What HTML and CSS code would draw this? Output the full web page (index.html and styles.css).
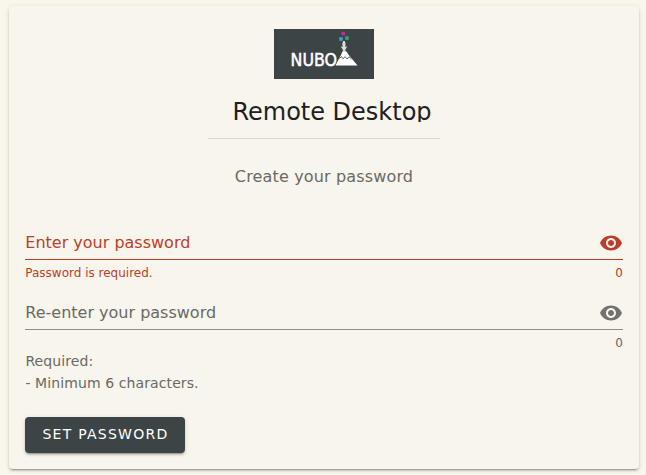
FILE: index.html
```html
<!DOCTYPE html>
<html lang="en">
<head>
<meta charset="utf-8">
<title>Remote Desktop</title>
<link rel="stylesheet" href="styles.css">
</head>
<body>
<main class="card">
  <header class="header">
    <svg class="logo" viewBox="0 0 100 50" role="img" aria-label="NUBO">
      <rect width="100" height="50" fill="#3c4445"/>
      <text class="logo-text" x="16.6" y="36.5" textLength="46.5" lengthAdjust="spacingAndGlyphs">NUBO</text>
      <path d="M61.5 36.5 L67.5 25 Q68 22 70.3 22 Q73 22 74 25 L83.5 36.5Z" fill="#fff"/>
      <path d="M65.5 29.5 L67.5 27.5 L69 29.8 L71 27.7 L73 30 L75 27.7 L77.5 29.8" fill="none" stroke="#3c4445" stroke-width=".8"/>
      <path d="M68.6 23 L69 21 L66.8 17.5 L68.8 17.8 L68.2 15 L69.2 12 L70.8 12 L71.6 15 L71.2 17.8 L73.2 17.5 L71.2 21 L71.8 23Z" fill="#d9dcdc"/>
      <rect x="67.4" y="2.8" width="3.7" height="3.6" fill="#c02d91"/>
      <rect x="65.2" y="8.2" width="3.6" height="3.6" fill="#3c9fd3"/>
      <rect x="71.2" y="7.3" width="3.5" height="3.5" fill="#45a65b"/>
    </svg>
    <h1 class="title">Remote Desktop</h1>
    <hr class="divider">
    <p class="subtitle">Create your password</p>
  </header>
  <section class="field error">
    <div class="input"><span class="label">Enter your password</span>
      <svg class="eye" viewBox="0 0 24 24"><path d="M12 4.5C7 4.5 2.73 7.61 1 12c1.73 4.39 6 7.5 11 7.5s9.27-3.11 11-7.5c-1.73-4.39-6-7.5-11-7.5zM12 17c-2.76 0-5-2.24-5-5s2.24-5 5-5 5 2.24 5 5-2.24 5-5 5zm0-8c-1.66 0-3 1.34-3 3s1.34 3 3 3 3-1.34 3-3-1.34-3-3-3z"/></svg>
    </div>
    <div class="details"><span>Password is required.</span><span>0</span></div>
  </section>
  <section class="field">
    <div class="input"><span class="label">Re-enter your password</span>
      <svg class="eye" viewBox="0 0 24 24"><path d="M12 4.5C7 4.5 2.73 7.61 1 12c1.73 4.39 6 7.5 11 7.5s9.27-3.11 11-7.5c-1.73-4.39-6-7.5-11-7.5zM12 17c-2.76 0-5-2.24-5-5s2.24-5 5-5 5 2.24 5 5-2.24 5-5 5zm0-8c-1.66 0-3 1.34-3 3s1.34 3 3 3 3-1.34 3-3-1.34-3-3-3z"/></svg>
    </div>
    <div class="details"><span></span><span>0</span></div>
  </section>
  <p class="rules">Required:<br>- Minimum 6 characters.</p>
  <button class="submit" type="button">SET PASSWORD</button>
</main>
</body>
</html>
```
FILE: styles.css
```css
* { box-sizing: border-box; }
body {
  margin: 0;
  padding: 6px 7px 0 9px;
  height: 475px;
  overflow: hidden;
  background: #f9f6ec;
  color: #6a6965;
  font-family: "DejaVu Sans", sans-serif;
}
.card {
  height: 463px;
  padding: 23px 16px 16px;
  border-radius: 4px;
  background: #f8f5ec;
  box-shadow: 0 3px 1px -2px rgba(0,0,0,.2), 0 2px 2px 0 rgba(0,0,0,.14), 0 1px 5px 0 rgba(0,0,0,.12);
}
.header { display: flex; flex-direction: column; align-items: center; height: 198px; }
.logo { display: block; width: 100px; height: 50px; }
.logo-text { fill: #fff; stroke: #fff; stroke-width: .5; font: 17.5px "DejaVu Sans", sans-serif; }
.title {
  margin: 17px 0 0;
  padding-left: 16px;
  height: 26px;
  overflow: hidden;
  color: #20201f;
  font-size: 24px;
  font-weight: 400;
  line-height: 32px;
  white-space: nowrap;
}
.divider { width: 232px; height: 1px; margin: 16px 0 0; border: 0; background: #d8d6ce; }
.subtitle { margin: 26px 0 0; font-size: 16px; line-height: 24px; letter-spacing: .15px; }
.field { height: 70px; }
.input {
  display: flex;
  align-items: center;
  justify-content: space-between;
  height: 33px;
  border-bottom: 1px solid #8e8d87;
  font-size: 16px;
}
.label { padding: 0 0 2px .3px; }
.eye { width: 24px; height: 24px; fill: #73726e; }
.details {
  display: flex;
  justify-content: space-between;
  padding: 6px 0 0 .3px;
  font-size: 12px;
  line-height: 14px;
}
.error, .error .eye { color: #bd3d2a; fill: #bd3d2a; }
.error .input { border-color: #bd3d2a; }
.rules { margin: -17px 0 0; padding-left: .4px; font-size: 14px; line-height: 22px; letter-spacing: .1px; }
.submit {
  display: block;
  width: 160px;
  height: 36px;
  margin-top: 23px;
  padding: 0 0 2px 1px;
  border: 0;
  border-radius: 4px;
  background: #3c4445;
  color: #fff;
  font: 14px "DejaVu Sans", sans-serif;
  letter-spacing: 1.25px;
  box-shadow: 0 3px 1px -2px rgba(0,0,0,.2), 0 2px 2px 0 rgba(0,0,0,.14), 0 1px 5px 0 rgba(0,0,0,.12);
}
```
